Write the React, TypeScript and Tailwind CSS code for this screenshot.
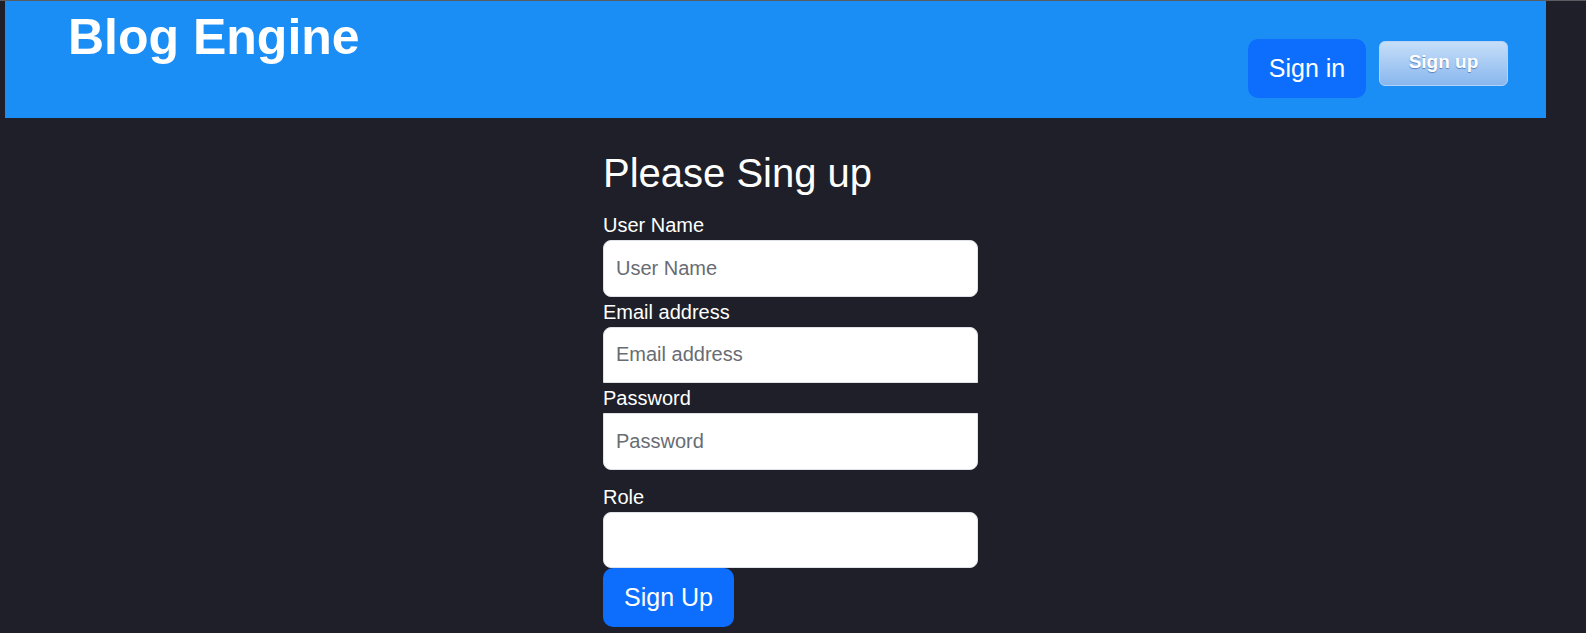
import { useState } from 'react';

const font = { fontFamily: '"Liberation Sans", Arial, sans-serif' };

function Field({
  label,
  placeholder,
  type = 'text',
  className = '',
}: {
  label: string;
  placeholder?: string;
  type?: string;
  className?: string;
}) {
  const [value, setValue] = useState('');
  return (
    <>
      <label className="block text-[20px] leading-[30px] text-white">{label}</label>
      <input
        type={type}
        value={value}
        onChange={(e) => setValue(e.target.value)}
        placeholder={placeholder}
        className={`block h-[56.5px] w-full border border-[#dee2e6] bg-white px-[12px] text-[20px] text-[#212529] outline-none placeholder:text-[#686c73] ${className}`}
      />
    </>
  );
}

export default function App() {
  return (
    <div className="min-h-screen bg-[#1e1f28] border-t border-[#5b5d63]" style={font}>
      <div className="pl-[5px] pr-[40px]">
        <header className="flex h-[117px] items-start justify-between bg-[#1b8ef5] pl-[63px] pr-[38px]">
          <h1 className="mt-[6px] text-[50px] leading-[60px] font-bold text-white">Blog Engine</h1>
          <div className="mt-[38px] flex items-start gap-[13px]">
            <button className="flex h-[59px] w-[118px] items-center justify-center rounded-[10px] bg-[#0d6efd] text-[25px] text-white">
              Sign in
            </button>
            <button className="mt-[2px] flex h-[45px] w-[129px] items-center justify-center rounded-[6px] border border-[#b4d3f6] bg-gradient-to-b from-[#c6def8] to-[#88b7ee] pb-[2px] text-[19px] font-bold text-white [text-shadow:0_1px_1px_#5a7fbf]">
              Sign up
            </button>
          </div>
        </header>
      </div>

      <main className="flex justify-center pr-[5px]">
        <form className="w-[375px]" onSubmit={(e) => e.preventDefault()}>
          <h2 className="mt-[31px] mb-[13px] text-[40px] leading-[48px] text-white">Please Sing up</h2>
          <Field label="User Name" placeholder="User Name" className="rounded-[8px]" />
          <Field label="Email address" placeholder="Email address" type="email" className="rounded-t-[8px]" />
          <Field label="Password" placeholder="Password" type="password" className="rounded-b-[8px]" />
          <div className="mt-[12px]">
            <Field label="Role" className="rounded-[8px]" />
          </div>
          <button
            type="submit"
            className="flex h-[59px] w-[131px] items-center justify-center rounded-[10px] bg-[#0d6efd] text-[25px] text-white"
          >
            Sign Up
          </button>
        </form>
      </main>
    </div>
  );
}
